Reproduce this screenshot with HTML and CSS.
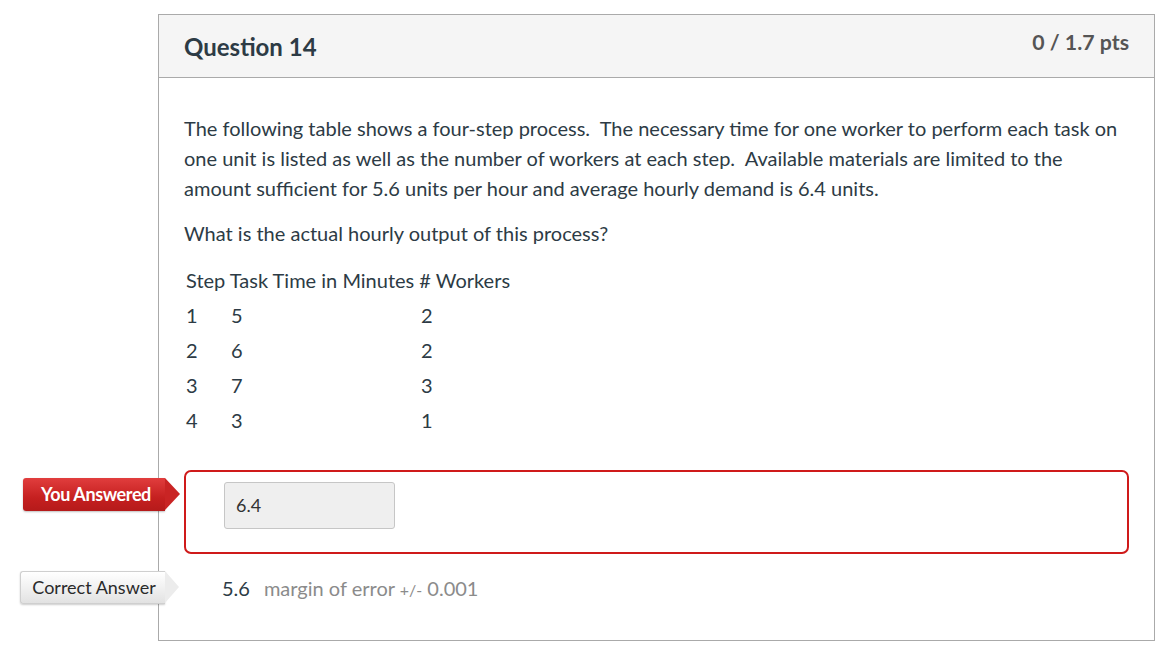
FILE: index.html
```html
<!DOCTYPE html>
<html>
<head>
<meta charset="utf-8">
<link rel="stylesheet" href="styles.css">
</head>
<body>
<div class="page">
  <div class="card">
    <div class="card-header">
      <h2 class="title">Question 14</h2>
      <div class="points">0 / 1.7 pts</div>
    </div>
    <div class="card-body">
      <p class="para">The following table shows a four-step process.&nbsp; The necessary time for one worker to perform each task on<br>one unit is listed as well as the number of workers at each step.&nbsp; Available materials are limited to the<br>amount sufficient for 5.6 units per hour and average hourly demand is 6.4 units.</p>
      <p class="para">What is the actual hourly output of this process?</p>
      <table class="steps">
        <tr><td colspan="3">Step Task Time in Minutes # Workers</td></tr>
        <tr><td class="c1">1</td><td class="c2">5</td><td class="c3">2</td></tr>
        <tr><td class="c1">2</td><td class="c2">6</td><td class="c3">2</td></tr>
        <tr><td class="c1">3</td><td class="c2">7</td><td class="c3">3</td></tr>
        <tr><td class="c1">4</td><td class="c2">3</td><td class="c3">1</td></tr>
      </table>
      <div class="answer-row">
        <div class="tag tag-wrong">You Answered</div>
        <div class="answer-box">
          <div class="answer-input">6.4</div>
        </div>
      </div>
      <div class="correct-row">
        <div class="tag tag-correct">Correct Answer</div>
        <span class="correct-value">5.6</span>
        <span class="margin">margin of error <span class="pm">+/-</span> 0.001</span>
      </div>
    </div>
  </div>
</div>
</body>
</html>
```

FILE: styles.css
```css
* { box-sizing: border-box; }
html, body { margin: 0; padding: 0; background: #fff; }
body {
  font-family: Lato, "Open Sans", "Liberation Sans", sans-serif;
  color: #2d3b45;
}
.page {
  padding: 14px 7px 0 158px;
}
.card {
  width: 997px;
  border: 1px solid #aaa;
}
.card-header {
  background: #f5f5f5;
  border-bottom: 1px solid #aaa;
  height: 63px;
  display: flex;
  justify-content: space-between;
  align-items: flex-start;
  padding: 0 25px 0 25px;
}
.title {
  margin: 0;
  padding-top: 16px;
  font-size: 24px;
  line-height: 32px;
  font-weight: 700;
  color: #2d3b45;
}
.points {
  padding-top: 14px;
  font-size: 21.3px;
  line-height: 26px;
  font-weight: 700;
  color: #555;
}
.card-body {
  padding: 35px 25px 36px 25px;
}
.para {
  margin: 0 0 15px 0;
  font-size: 20px;
  line-height: 30px;
  white-space: nowrap;
}
.steps {
  border-collapse: collapse;
  font-size: 20px;
  line-height: 27px;
  margin: 0 0 32px 0;
}
.steps td {
  padding: 4px 2px;
  vertical-align: middle;
}
.steps .c1 { width: 45px; }
.steps .c2 { width: 190px; }
.answer-row {
  position: relative;
}
.answer-box {
  border: 2px solid #cf1a1a;
  border-radius: 7px;
  height: 84px;
  padding: 10px 0 0 38px;
}
.answer-input {
  width: 171px;
  height: 47px;
  background: #efefef;
  border: 1px solid #c6c6c6;
  border-radius: 3px;
  font-size: 18px;
  line-height: 45px;
  padding-left: 11px;
  color: #333;
}
.tag {
  position: absolute;
  height: 33px;
  font-size: 18px;
  line-height: 33px;
  text-align: center;
  border-radius: 3px 0 0 3px;
  white-space: nowrap;
}
.tag::after {
  content: "";
  position: absolute;
  top: 0;
  right: -15px;
  width: 0;
  height: 0;
  border-top: 16.5px solid transparent;
  border-bottom: 16.5px solid transparent;
}
.tag-wrong {
  left: -161px;
  top: 8px;
  width: 142px;
  padding-left: 4px;
  color: #fff;
  font-weight: 700;
  letter-spacing: -0.4px;
  background: linear-gradient(#e13d3d, #c52020 60%, #b51a1a);
  box-shadow: 0 1px 2px rgba(0,0,0,0.25);
}
.tag-wrong::after {
  border-left: 15px solid #c92424;
}
.tag-correct {
  left: -164px;
  top: 0;
  width: 145px;
  padding-left: 2px;
  color: #2a2a2a;
  background: linear-gradient(#ffffff, #f1f1f1 50%, #e2e2e2);
  border: 1px solid #cfcfcf;
  border-right: none;
  line-height: 31px;
  box-shadow: 0 1px 2px rgba(0,0,0,0.2);
}
.tag-correct::after {
  top: -1px;
  right: -14px;
  border-left: 14px solid #ececec;
}
.correct-row {
  position: relative;
  margin-top: 17px;
  height: 33px;
  display: flex;
  align-items: center;
  padding-left: 38px;
  font-size: 20px;
}
.correct-value {
  color: #2d3b45;
  margin-right: 14px;
}
.margin {
  color: #8b8b8b;
}
.pm {
  font-size: 16px;
}
```
